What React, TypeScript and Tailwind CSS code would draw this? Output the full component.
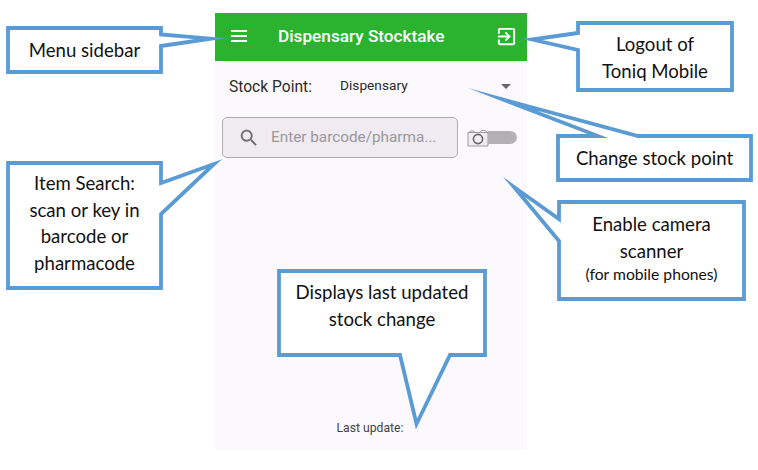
const STROKE = "#5b9bd5";

function Shape({ points }: { points: string }) {
  return <polygon points={points} fill="#ffffff" stroke={STROKE} strokeWidth={3.8} strokeLinejoin="miter" strokeMiterlimit={30} />;
}

export default function App() {
  return (
    <div className="relative w-[758px] h-[470px] bg-white overflow-hidden font-['Roboto',sans-serif]">
      {/* Phone screen */}
      <div className="ml-[215px] w-[312px] pt-[13px]">
        <div className="flex flex-col h-[437px] bg-[#fcf9fd]">
          <div className="flex items-center h-[48px] bg-[#2bb32f] pl-[14px] pr-[9px] text-white">
            <div className="flex flex-col gap-[3px] w-[20px] px-[2px] -mt-[2px] shrink-0">
              <span className="block h-[2px] bg-white" />
              <span className="block h-[2px] bg-white" />
              <span className="block h-[2px] bg-white" />
            </div>
            <span className="flex-1 text-[17.2px] font-medium -mt-[1px] pl-[29px] whitespace-nowrap">Dispensary Stocktake</span>
            <svg viewBox="0 0 24 24" className="w-[23px] h-[23px] -mt-[1px] shrink-0" fill="currentColor">
              <path d="M10.09 15.59L11.5 17l5-5-5-5-1.41 1.41L12.67 11H3v2h9.67l-2.58 2.59zM19 3H5c-1.11 0-2 .9-2 2v4h2V5h14v14H5v-4H3v4c0 1.1.89 2 2 2h14c1.1 0 2-.9 2-2V5c0-1.1-.9-2-2-2z" />
            </svg>
          </div>
          <div className="flex items-center h-[50px] pl-[14px] pr-[16px]">
            <span className="w-[111px] text-[15.6px] text-[#2a2a2a] mt-[3px]">Stock Point:</span>
            <span className="flex-1 text-[13.7px] text-[#2a2a2a] -mt-[1px]">Dispensary</span>
            <span className="w-0 h-0 border-x-[5px] border-x-transparent border-t-[5px] border-t-[#666666]" />
          </div>
          <div className="flex items-center mt-[6px] pl-[7px]">
            <div className="flex items-center w-[236px] h-[41px] rounded-[5px] border border-[#b0adb2] bg-[#efebf0] pl-[15px]">
              <svg viewBox="0 0 24 24" className="w-[22px] h-[22px] shrink-0" fill="#6e6e6e">
                <path d="M15.5 14h-.79l-.28-.27C15.41 12.59 16 11.11 16 9.5 16 5.91 13.09 3 9.5 3S3 5.91 3 9.5 5.91 16 9.5 16c1.61 0 3.09-.59 4.23-1.57l.27.28v.79l5 4.99L20.49 19l-4.99-5zm-6 0C7.01 14 5 11.99 5 9.5S7.01 5 9.5 5 14 7.01 14 9.5 11.99 14 9.5 14z" />
              </svg>
              <span className="ml-[11px] text-[15.3px] text-[#9a989c] whitespace-nowrap">Enter barcode/pharma...</span>
            </div>
            <svg viewBox="0 0 22 18" className="w-[22px] h-[18px] ml-[9px] shrink-0" fill="none" stroke="#9a9a9a" strokeWidth="1">
              <path d="M1 3.5h20v13.5H1z" fill="#efedf0" />
              <path d="M3 3.5V2h4v1.5M13 3.5L14.5 1.5h4L20 3.5" />
              <circle cx="11" cy="10" r="4.6" strokeWidth="1.6" stroke="#666666" />
            </svg>
            <span className="block w-[29px] h-[13px] -ml-px rounded-r-full bg-[#b3b1b4]" />
          </div>
          <div className="mt-auto mb-[13px] pr-[2px] text-center text-[12.2px] text-[#444444]">Last update:</div>
        </div>
      </div>

      {/* Callout outlines */}
      <svg className="absolute inset-0 w-[758px] h-[470px]" viewBox="0 0 758 470">
        <Shape points="8,28 161,28 161,34.5 210.5,38.7 161,46 161,72 8,72" />
        <Shape points="578,23 732,23 732,90 578,90 578,50 532,39.5 578,33" />
        <Shape points="558,136 598,136 503,99.5 638,136 751,136 751,180 558,180" />
        <Shape points="559,202 744,202 744,299 559,299 559,241 514,187 559,219" />
        <Shape points="8,163 161,163 161,183 214,164 161,214 161,288 8,288" />
        <Shape points="279,271 485,271 485,355 450,355 416.5,424 400,355 279,355" />
      </svg>

      {/* Callout labels */}
      <div className="absolute inset-0 font-['Lato',sans-serif] text-[18.6px] leading-[26.5px] text-[#111111] text-center">
        <div className="absolute left-[8px] top-[37px] w-[153px]">Menu sidebar</div>
        <div className="absolute left-[578px] top-[31px] w-[154px]">Logout of<br />Toniq Mobile</div>
        <div className="absolute left-[558px] top-[145px] w-[193px]">Change stock point</div>
        <div className="absolute left-[559px] top-[211px] w-[185px]">
          Enable camera<br />scanner
          <div className="text-[15.7px] leading-[20px]">(for mobile phones)</div>
        </div>
        <div className="absolute left-[8px] top-[170px] w-[153px]">Item Search:<br />scan or key in<br />barcode or<br />pharmacode</div>
        <div className="absolute left-[279px] top-[279px] w-[206px]">Displays last updated<br />stock change</div>
      </div>
    </div>
  );
}
